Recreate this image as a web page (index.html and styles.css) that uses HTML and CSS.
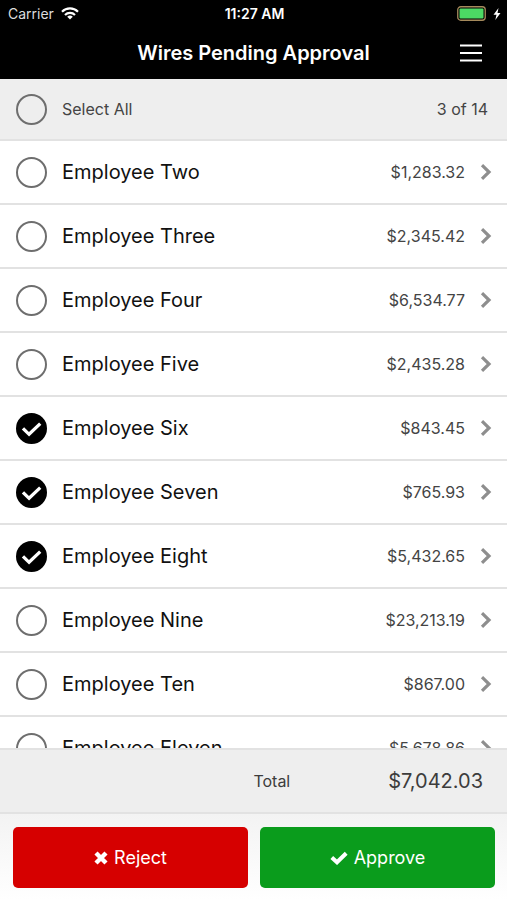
FILE: index.html
```html
<!DOCTYPE html>
<html lang="en">
<head>
<meta charset="utf-8">
<meta name="viewport" content="width=device-width, initial-scale=1">
<title>Wires Pending Approval</title>
<link rel="stylesheet" href="styles.css">
</head>
<body>
<svg class="defs" width="0" height="0" aria-hidden="true">
  <symbol id="tick" viewBox="0 0 32 32"><path d="M7.200 15.800L13.500 22 25 11" fill="none" stroke="#fff" stroke-width="3.400"/></symbol>
  <symbol id="chevron" viewBox="0 0 12 16"><path d="M2 1.2L9 8l-7 6.800" fill="none" stroke="#8e8e8e" stroke-width="3.200"/></symbol>
</svg>
<div class="app">
  <header class="top">
    <div class="status">
      <div class="carrier">
        <span>Carrier</span>
        <svg width="18" height="13" viewBox="0 0 18 13" aria-hidden="true"><g fill="none" stroke="#fff" stroke-width="2.200"><path d="M1 4.700a11.300 11.300 0 0 1 16 0"/><path d="M4 8a7.100 7.100 0 0 1 10 0"/></g><path d="M9 12.500L6.200 9.800a4 4 0 0 1 5.600 0z" fill="#fff"/></svg>
      </div>
      <div class="time">11:27 AM</div>
      <div class="battery">
        <svg width="30" height="15" viewBox="0 0 30 15" aria-hidden="true"><rect x="1.750" y=".75" width="27.500" height="13.500" rx="3" fill="none" stroke="#a58a5c" stroke-width="1.300"/><rect x="3.500" y="2.500" width="24" height="10" rx="1" fill="#4cd964"/></svg>
        <svg width="8" height="12" viewBox="0 0 8 12" aria-hidden="true"><path d="M5.500 0L.5 6.700h3L2.300 12 7.500 5H4.500z" fill="#fff"/></svg>
      </div>
    </div>
    <div class="nav">
      <h1>Wires Pending Approval</h1>
      <button class="menu" type="button" aria-label="Menu">
        <svg width="22" height="18" viewBox="0 0 22 18" aria-hidden="true"><path d="M0 1.500h22M0 9h22M0 16.500h22" stroke="#fff" stroke-width="2.200"/></svg>
      </button>
    </div>
  </header>

  <div class="select-bar">
    <label class="pick small"><span class="check"><input type="checkbox"><svg><use href="#tick"/></svg></span>Select All</label>
    <span class="count">3 of 14</span>
  </div>

  <ul class="list">
    <li class="row"><label class="pick"><span class="check"><input type="checkbox"><svg><use href="#tick"/></svg></span>Employee Two</label><a class="amount" href="#">$1,283.32<svg><use href="#chevron"/></svg></a></li>
    <li class="row"><label class="pick"><span class="check"><input type="checkbox"><svg><use href="#tick"/></svg></span>Employee Three</label><a class="amount" href="#">$2,345.42<svg><use href="#chevron"/></svg></a></li>
    <li class="row"><label class="pick"><span class="check"><input type="checkbox"><svg><use href="#tick"/></svg></span>Employee Four</label><a class="amount" href="#">$6,534.77<svg><use href="#chevron"/></svg></a></li>
    <li class="row"><label class="pick"><span class="check"><input type="checkbox"><svg><use href="#tick"/></svg></span>Employee Five</label><a class="amount" href="#">$2,435.28<svg><use href="#chevron"/></svg></a></li>
    <li class="row"><label class="pick"><span class="check"><input type="checkbox" checked><svg><use href="#tick"/></svg></span>Employee Six</label><a class="amount" href="#">$843.45<svg><use href="#chevron"/></svg></a></li>
    <li class="row"><label class="pick"><span class="check"><input type="checkbox" checked><svg><use href="#tick"/></svg></span>Employee Seven</label><a class="amount" href="#">$765.93<svg><use href="#chevron"/></svg></a></li>
    <li class="row"><label class="pick"><span class="check"><input type="checkbox" checked><svg><use href="#tick"/></svg></span>Employee Eight</label><a class="amount" href="#">$5,432.65<svg><use href="#chevron"/></svg></a></li>
    <li class="row"><label class="pick"><span class="check"><input type="checkbox"><svg><use href="#tick"/></svg></span>Employee Nine</label><a class="amount" href="#">$23,213.19<svg><use href="#chevron"/></svg></a></li>
    <li class="row"><label class="pick"><span class="check"><input type="checkbox"><svg><use href="#tick"/></svg></span>Employee Ten</label><a class="amount" href="#">$867.00<svg><use href="#chevron"/></svg></a></li>
    <li class="row"><label class="pick"><span class="check"><input type="checkbox"><svg><use href="#tick"/></svg></span>Employee Eleven</label><a class="amount" href="#">$5,678.86<svg><use href="#chevron"/></svg></a></li>
  </ul>

  <div class="total">
    <span class="total-label">Total</span>
    <span class="total-value">$7,042.03</span>
  </div>

  <footer class="actions">
    <button class="btn reject" type="button"><svg width="14" height="14" viewBox="0 0 14 14" aria-hidden="true"><path d="M2 2l10 10M12 2L2 12" stroke="#fff" stroke-width="4.400"/></svg>Reject</button>
    <button class="btn approve" type="button"><svg width="18" height="14" viewBox="0 0 18 14" aria-hidden="true"><path d="M1.800 6.500L7 11.300 16.200 2.300" fill="none" stroke="#fff" stroke-width="4"/></svg>Approve</button>
  </footer>
</div>
</body>
</html>
```
FILE: styles.css
```css
* { box-sizing: border-box; }

body {
  margin: 0;
  background: #fff;
  color: #111;
  font-family: Inter, Roboto, "Liberation Sans", sans-serif;
}

.defs { position: absolute; }

button {
  border: 0;
  padding: 0;
  background: none;
  color: inherit;
  font: inherit;
  cursor: pointer;
}

.app {
  display: flex;
  flex-direction: column;
  height: 100vh;
}

.top {
  background: #000;
  color: #fff;
}

.status {
  display: grid;
  grid-template-columns: 1fr auto 1fr;
  align-items: center;
  height: 27px;
  padding: 0 6px 0 8px;
  font-size: 14px;
}

.carrier,
.battery {
  display: flex;
  align-items: center;
  gap: 7px;
}

.carrier { color: #ddd; }
.battery { justify-content: flex-end; }
.time { font-weight: 600; }

.nav {
  display: grid;
  grid-template-columns: 48px 1fr 48px;
  align-items: center;
  height: 52px;
  padding: 0 12px;
}

h1 {
  grid-column: 2;
  margin: 0;
  font-size: 20px;
  font-weight: 600;
  text-align: center;
}

.menu {
  display: flex;
  align-items: center;
  justify-content: center;
  height: 48px;
}

.select-bar {
  display: flex;
  align-items: center;
  justify-content: space-between;
  height: 62px;
  padding: 0 19px 0 16px;
  border-bottom: 2px solid #e2e2e2;
  background: #eee;
  color: #444;
  font-size: 16px;
}

.pick {
  display: flex;
  align-items: center;
  gap: 15px;
  font-size: 20px;
}

.small { font-size: 16px; }

.check { display: grid; }

.check input,
.check svg {
  grid-area: 1 / 1;
  width: 31px;
  height: 31px;
  margin: 0;
}

.check input {
  appearance: none;
  border: 2px solid #6e6e6e;
  border-radius: 50%;
}

.check input:checked {
  border-color: #000;
  background: #000;
}

.check svg {
  visibility: hidden;
  pointer-events: none;
}

.check input:checked + svg { visibility: visible; }

.list {
  flex: 1;
  min-height: 0;
  margin: 0;
  padding: 0;
  overflow: hidden;
  list-style: none;
}

.row {
  display: flex;
  align-items: center;
  justify-content: space-between;
  height: 64px;
  padding: 0 15px 0 16px;
  border-bottom: 2px solid #e2e2e2;
}

.amount {
  display: flex;
  align-items: center;
  gap: 15px;
  color: #444;
  font-size: 16px;
  text-decoration: none;
}

.amount svg {
  width: 12px;
  height: 16px;
}

.total {
  display: flex;
  align-items: center;
  justify-content: flex-end;
  height: 66px;
  padding: 0 24px;
  border-top: 2px solid #e2e2e2;
  border-bottom: 2px solid #e2e2e2;
  background: #eee;
  color: #3c3c3c;
}

.total-label { font-size: 16px; }

.total-value {
  flex-basis: 42%;
  font-size: 20px;
  text-align: right;
}

.actions {
  display: grid;
  grid-template-columns: 1fr 1fr;
  gap: 12px;
  padding: 13px 12px 12px 13px;
  background: linear-gradient(#f3f3f3, #fff);
}

.btn {
  display: flex;
  align-items: center;
  justify-content: center;
  gap: 6px;
  height: 61px;
  border-radius: 5px;
  color: #fff;
  font-size: 18px;
}

.reject { background: #d60000; }
.approve { background: #0a9c1c; }
```
